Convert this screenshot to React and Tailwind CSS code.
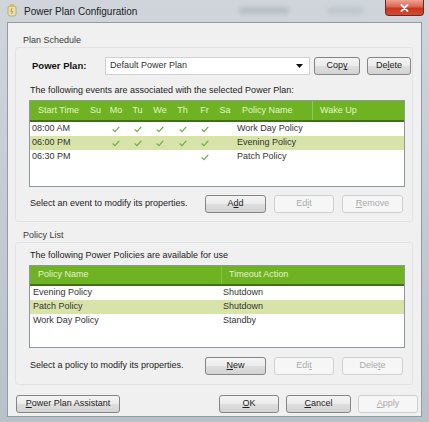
import React from "react";

const Check = () => (
  <svg width="8" height="7" viewBox="0 0 8 7">
    <path d="M1 3.8 L3 5.6 L7 1.2" fill="none" stroke="#6aad45" strokeWidth="1.2" strokeLinecap="round" strokeLinejoin="round" />
  </svg>
);

function Btn({ w, disabled, children }) {
  return (
    <div
      className={
        "h-[18px] flex items-center justify-center rounded-[3px] border text-[9px] shrink-0 " +
        (disabled
          ? "border-[#cdd0d3] bg-[#f6f6f6] text-[#ababab] "
          : "border-[#858585] bg-[linear-gradient(#f4f4f4_0%,#ececec_48%,#dedede_52%,#d3d3d3_100%)] text-[#1c1c1c] ") +
        w
      }
    >
      {children}
    </div>
  );
}

const events = [
  { t: "08:00 AM", days: [0, 1, 1, 1, 1, 1, 0], p: "Work Day Policy" },
  { t: "06:00 PM", days: [0, 1, 1, 1, 1, 1, 0], p: "Evening Policy", hl: true },
  { t: "06:30 PM", days: [0, 0, 0, 0, 0, 1, 0], p: "Patch Policy" },
];

const policies = [
  { n: "Evening Policy", a: "Shutdown" },
  { n: "Patch Policy", a: "Shutdown", hl: true },
  { n: "Work Day Policy", a: "Standby" },
];

const dayNames = ["Su", "Mo", "Tu", "We", "Th", "Fr", "Sa"];

export default function App() {
  return (
    <div className="w-[429px] h-[422px] flex flex-col overflow-hidden bg-[linear-gradient(#cfd5db,#b9c1c9)] font-['Liberation_Sans',Arial,sans-serif] text-[9px] text-[#222]">
      {/* Title bar */}
      <div className="h-[22px] shrink-0 flex items-start">
        <svg className="ml-[6px] mt-[3px]" width="12" height="14" viewBox="0 0 12 14">
          <rect x="2" y="3" width="8" height="10" rx="2" fill="#eadfae" stroke="#b8a35a" strokeWidth="0.8" />
          <rect x="4" y="1" width="4" height="3" rx="1" fill="#d8bb55" />
          <path d="M6 5 L4.8 8.3 L6.6 8.3 L5.6 11" fill="none" stroke="#a98a2c" strokeWidth="0.8" />
        </svg>
        <div className="ml-[6px] mt-[4px] text-[10px] text-[#222]">Power Plan Configuration</div>
        <div className="ml-[102px] mt-[7px] w-[50px] h-[7px] rounded-full bg-[#a9b1b9] blur-[2px] opacity-60" />
        <div className="ml-[38px] mt-[7px] w-[36px] h-[7px] rounded-full bg-[#b0b8c0] blur-[2px] opacity-50" />
        <div className="ml-auto mr-[5px] w-[39px] h-[16px] rounded-b-[4px] border border-t-0 border-[#7a2418] bg-[linear-gradient(#eca392_0%,#dc6550_45%,#c8361e_55%,#d54a2e_100%)] flex items-center justify-center">
          <svg width="9" height="8" viewBox="0 0 9 8">
            <path d="M1.5 1 L7.5 7 M7.5 1 L1.5 7" stroke="#ffffff" strokeWidth="1.8" strokeLinecap="round" />
          </svg>
        </div>
      </div>

      {/* Client area */}
      <div className="flex-1 mx-[7px] mb-[5px] border border-[#939ca6] bg-[#f0f0f0] flex flex-col">
        <div className="mt-[11px] ml-[15px] h-[12px] leading-[12px] text-[#3a3a3a]">Plan Schedule</div>

        {/* Group 1 */}
        <div className="mt-[1px] ml-[7px] w-[398px] h-[175px] border border-[#e3e3e3] rounded-[3px] flex flex-col">
          <div className="mt-[9px] h-[18px] flex items-center">
            <div className="ml-[16px] w-[73px] font-bold text-[9.5px] text-[#111]">Power Plan:</div>
            <div className="w-[205px] h-[18px] bg-white border border-[#d0d0d0] flex items-center pl-[4px] text-[#333]">
              <span>Default Power Plan</span>
              <svg className="ml-auto mr-[6px]" width="7" height="4" viewBox="0 0 7 4">
                <path d="M0 0 L7 0 L3.5 4 Z" fill="#111" />
              </svg>
            </div>
            <div className="ml-[4px]"><Btn w="w-[46px]">Cop<u>y</u></Btn></div>
            <div className="ml-[7px]"><Btn w="w-[44px]">De<u>l</u>ete</Btn></div>
          </div>

          <div className="mt-[9px] ml-[14px] h-[12px] leading-[12px]">
            The following events are associated with the selected Power Plan:
          </div>

          <div className="mt-[4px] ml-[13px] w-[376px] h-[87px] border border-[#8f979f] bg-white flex flex-col">
            <div className="h-[21px] shrink-0 bg-[#6fb222] border-b-2 border-[#42701a] grid grid-cols-[55px_21px_20px_23px_22px_23px_21px_20px_77px_1fr] items-center text-[#e4f5cf]">
              <div className="pl-[8px] whitespace-nowrap">Start Time</div>
              {dayNames.map((d) => (
                <div key={d} className="text-center">{d}</div>
              ))}
              <div className="pl-[7px] whitespace-nowrap">Policy Name</div>
              <div className="h-full border-l border-[#8fc85a] pl-[7px] flex items-center">Wake Up</div>
            </div>
            {events.map((e) => (
              <div
                key={e.t}
                className={
                  "h-[14px] shrink-0 grid grid-cols-[55px_21px_20px_23px_22px_23px_21px_20px_77px_1fr] items-center text-[#333] " +
                  (e.hl ? "bg-[#d7e3a9]" : "")
                }
              >
                <div className="pl-[2px]">{e.t}</div>
                {e.days.map((on, i) => (
                  <div key={i} className="flex justify-center">{on ? <Check /> : null}</div>
                ))}
                <div className="pl-[2px] whitespace-nowrap">{e.p}</div>
                <div />
              </div>
            ))}
          </div>

          <div className="mt-[8px] h-[18px] flex items-center">
            <div className="ml-[14px] w-[175px]">Select an event to modify its properties.</div>
            <Btn w="w-[61px]">A<u>d</u>d</Btn>
            <div className="ml-[8px]"><Btn w="w-[60px]" disabled>Ed<u>i</u>t</Btn></div>
            <div className="ml-[8px]"><Btn w="w-[61px]" disabled><u>R</u>emove</Btn></div>
          </div>
        </div>

        <div className="mt-[7px] ml-[15px] h-[12px] leading-[12px] text-[#3a3a3a]">Policy List</div>

        {/* Group 2 */}
        <div className="mt-[1px] ml-[7px] w-[398px] h-[143px] border border-[#e3e3e3] rounded-[3px] flex flex-col">
          <div className="mt-[6px] ml-[14px] h-[12px] leading-[12px]">
            The following Power Policies are available for use
          </div>
          <div className="mt-[4px] ml-[13px] w-[376px] h-[83px] border border-[#8f979f] bg-white flex flex-col">
            <div className="h-[20px] shrink-0 bg-[#6fb222] border-b-2 border-[#42701a] grid grid-cols-[191px_1fr] items-center text-[#e4f5cf]">
              <div className="pl-[8px]">Policy Name</div>
              <div className="h-full border-l border-[#84c04c] pl-[7px] flex items-center">Timeout Action</div>
            </div>
            {policies.map((p) => (
              <div
                key={p.n}
                className={
                  "h-[14px] shrink-0 grid grid-cols-[191px_1fr] items-center text-[#333] " +
                  (p.hl ? "bg-[#d7e3a9]" : "")
                }
              >
                <div className="pl-[3px]">{p.n}</div>
                <div className="pl-[2px]">{p.a}</div>
              </div>
            ))}
          </div>
          <div className="mt-[9px] h-[18px] flex items-center">
            <div className="ml-[14px] w-[175px]">Select a policy to modify its properties.</div>
            <Btn w="w-[61px]"><u>N</u>ew</Btn>
            <div className="ml-[8px]"><Btn w="w-[60px]" disabled>Edi<u>t</u></Btn></div>
            <div className="ml-[8px]"><Btn w="w-[61px]" disabled>Dele<u>t</u>e</Btn></div>
          </div>
        </div>

        {/* Bottom buttons */}
        <div className="mt-[10px] h-[18px] flex items-center">
          <div className="ml-[8px]"><Btn w="w-[104px]"><u>P</u>ower Plan Assistant</Btn></div>
          <div className="ml-[99px]"><Btn w="w-[60px]"><u>O</u>K</Btn></div>
          <div className="ml-[7px]"><Btn w="w-[65px]"><u>C</u>ancel</Btn></div>
          <div className="ml-[7px]"><Btn w="w-[60px]" disabled><u>A</u>pply</Btn></div>
        </div>
      </div>
    </div>
  );
}
